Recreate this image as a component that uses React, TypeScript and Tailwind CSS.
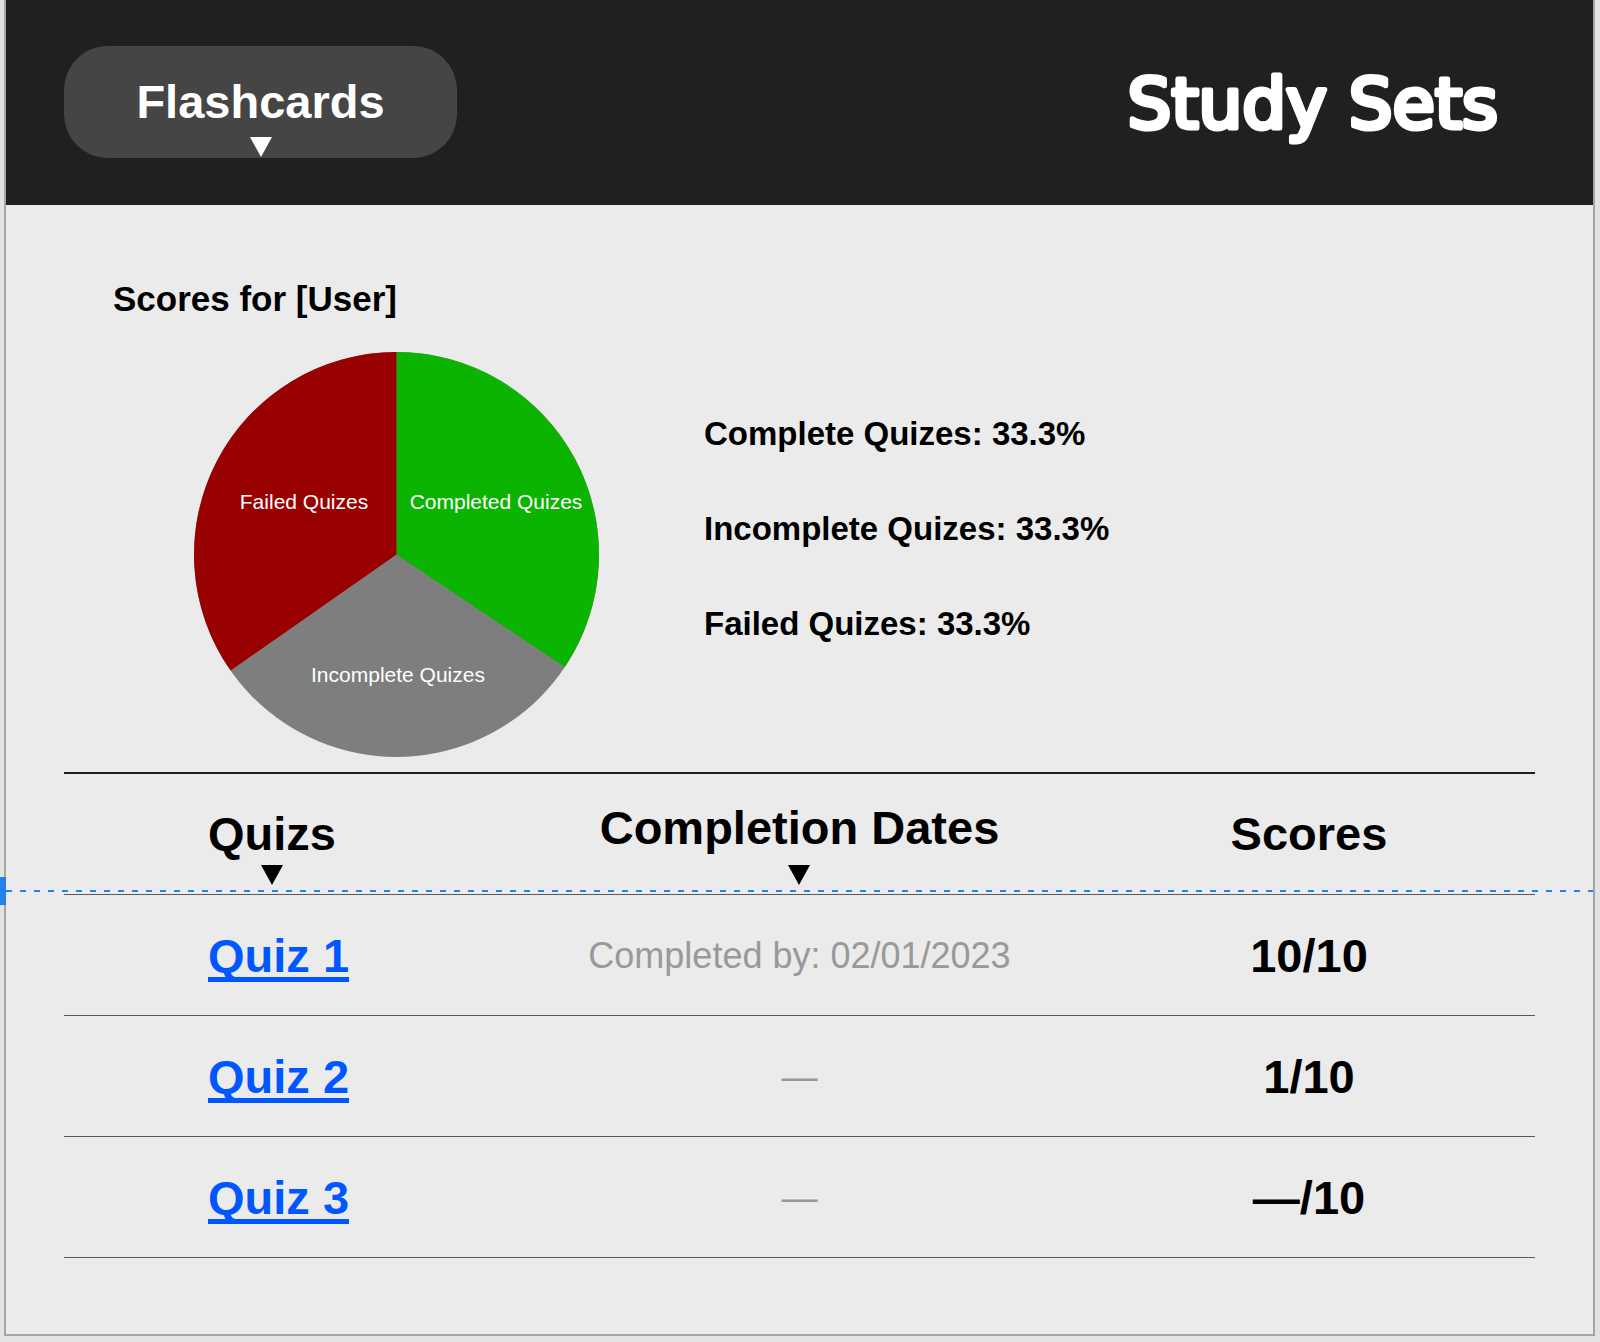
import React from "react";

const quizzes = [
  { name: "Quiz 1", date: "Completed by: 02/01/2023", score: "10/10" },
  { name: "Quiz 2", date: "—", score: "1/10" },
  { name: "Quiz 3", date: "—", score: "—/10" },
];

const stats = [
  "Complete Quizes: 33.3%",
  "Incomplete Quizes: 33.3%",
  "Failed Quizes: 33.3%",
];

function Arrow() {
  return (
    <svg aria-hidden="true" viewBox="0 0 22 20" className="block h-5 w-[22px] fill-current">
      <path d="M0 0H22L11 20Z" />
    </svg>
  );
}

/* Wordmark: thin letters thickened with a round-joined outline for a marker look. */
function Wordmark() {
  return (
    <svg
      viewBox="0 0 376 84"
      className="block h-[84px] w-[376px] overflow-visible font-[Chalkboard,'Comic_Sans_MS','DejaVu_Sans',sans-serif] text-[69px]"
    >
      <text
        x="375"
        y="66"
        textAnchor="end"
        fill="white"
        stroke="white"
        strokeWidth="5"
        strokeLinejoin="round"
      >
        Study Sets
      </text>
    </svg>
  );
}

function PieChart() {
  return (
    <svg
      role="img"
      aria-label="Quiz results"
      viewBox="0 0 405 405"
      className="block h-[405px] w-[405px] shrink-0 text-[21px]"
    >
      <circle cx="202.5" cy="202.5" r="202.5" fill="#7e7e7e" />
      <path d="M202.5 202.5V0A202.5 202.5 0 0 1 370.8 315.1Z" fill="#0bb400" />
      <path d="M202.5 202.5L36.6 318.6A202.5 202.5 0 0 1 202.5 0Z" fill="#990000" />
      <g fill="white" textAnchor="middle">
        <text x="110" y="157">Failed Quizes</text>
        <text x="302" y="157">Completed Quizes</text>
        <text x="204" y="330">Incomplete Quizes</text>
      </g>
    </svg>
  );
}

export default function App() {
  return (
    <div className="min-h-screen bg-[#e3e3e3] pr-[5px] pb-1.5 pl-1 font-['Liberation_Sans',Arial,sans-serif] text-black">
      <div className="border-x-2 border-b-2 border-[#a5a5a5] bg-[#ebebeb]">
        <header className="flex items-start justify-between bg-[#202020] pt-[46px] pr-[94px] pb-[47px] pl-[58px] text-white">
          <button
            type="button"
            aria-haspopup="menu"
            className="flex h-28 w-[393px] flex-col items-center gap-[11px] rounded-[44px] bg-[#454545] pt-8 text-[47px] leading-[48px] font-bold"
          >
            Flashcards
            <Arrow />
          </button>
          <h1 className="pt-4">
            <Wordmark />
          </h1>
        </header>

        <main>
          <section className="pt-[70px] pb-[15px]">
            <h2 className="pl-[107px] text-[35px] leading-[48px] font-bold">Scores for [User]</h2>
            <div className="flex gap-[105px] pt-[29px] pl-[188px]">
              <PieChart />
              <ul className="flex flex-col gap-[47px] pt-[58px] text-[33px] leading-[48px] font-bold">
                {stats.map((stat) => (
                  <li key={stat}>{stat}</li>
                ))}
              </ul>
            </div>
          </section>

          <section className="relative px-[58px] pb-[76px]">
            <table className="w-full table-fixed border-separate border-spacing-0 border-t-2 border-[#202020] text-[47px] leading-[48px]">
              <colgroup>
                <col className="w-[452px]" />
                <col />
                <col className="w-[452px]" />
              </colgroup>
              <thead>
                <tr>
                  <th className="h-[121px] border-b border-[#5a5a5a] pb-[9px] pl-36 text-left align-bottom">
                    <button type="button" className="flex flex-col items-center gap-[7px]">
                      Quizs
                      <Arrow />
                    </button>
                  </th>
                  <th className="h-[121px] border-b border-[#5a5a5a] pb-[9px] align-bottom">
                    <button type="button" className="mx-auto flex flex-col items-center gap-[13px]">
                      Completion Dates
                      <Arrow />
                    </button>
                  </th>
                  <th className="h-[121px] border-b border-[#5a5a5a] align-middle">Scores</th>
                </tr>
              </thead>
              <tbody>
                {quizzes.map((quiz) => (
                  <tr key={quiz.name}>
                    <td className="h-[121px] border-b border-[#5a5a5a] pt-0.5 pl-36 font-bold">
                      <a
                        href="#quiz"
                        className="text-[#0057ff] underline decoration-[5px] underline-offset-[5px] [text-decoration-skip-ink:none]"
                      >
                        {quiz.name}
                      </a>
                    </td>
                    <td className="h-[121px] border-b border-[#5a5a5a] pt-0.5 text-center text-4xl text-[#999999]">
                      {quiz.date}
                    </td>
                    <td className="h-[121px] border-b border-[#5a5a5a] pt-0.5 text-center font-bold">
                      {quiz.score}
                    </td>
                  </tr>
                ))}
              </tbody>
            </table>
            <div
              aria-hidden="true"
              className="absolute inset-x-0 top-[118px] h-0.5 bg-[repeating-linear-gradient(to_right,#2680eb_0_6px,transparent_6px_14px)]"
            />
            <div aria-hidden="true" className="absolute top-[105px] -left-1.5 h-7 w-1.5 bg-[#2680eb]" />
          </section>
        </main>
      </div>
    </div>
  );
}
